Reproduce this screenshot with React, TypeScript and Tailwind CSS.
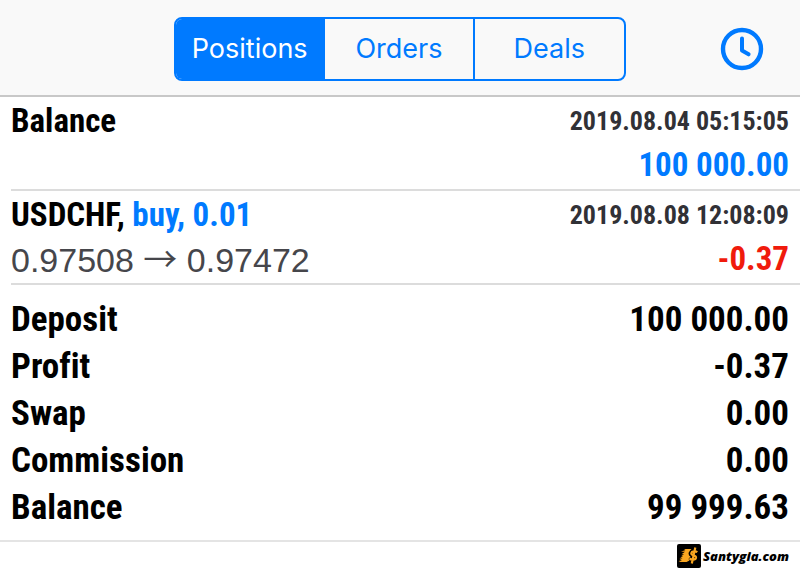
import { useState } from 'react'

const TABS = ['Positions', 'Orders', 'Deals']

const SUMMARY = [
  { label: 'Deposit', value: '100 000.00' },
  { label: 'Profit', value: '-0.37' },
  { label: 'Swap', value: '0.00' },
  { label: 'Commission', value: '0.00' },
  { label: 'Balance', value: '99 999.63' },
]

function ClockIcon() {
  return (
    <svg className="w-11 h-11" viewBox="0 0 44 44" fill="none" stroke="currentColor" aria-hidden="true">
      <circle cx="22" cy="22" r="19" strokeWidth="4.4" />
      <path d="M22 11.500v12l6.600 3.800" strokeWidth="4" strokeLinecap="round" strokeLinejoin="round" />
    </svg>
  )
}

function BrandLogo() {
  return (
    <svg className="w-6 h-6" viewBox="0 0 24 24" aria-hidden="true">
      <rect width="24" height="24" rx="2" fill="#000" />
      <path
        d="M7 5h7.500l-1.500 1.600L11.500 9l.5 2.500 1.500 1-2 2.500 1 1.500-3 1.500H1.500L5 16.200H2l3.500-1.700H2.500L6 12.200H4l3-2H4.500L8 7.800H4L8.500 6z"
        fill="#f9a620"
      />
      <path
        d="M20.300 8.200c-1.700-1.300-5.600-1.200-6 1-.4 2.500 5.200 1.600 4.700 4.500-.5 2.500-4.800 2.400-6.500.7M18.300 3.500l-3.500 16"
        fill="none"
        stroke="#f9a620"
        strokeWidth="2.200"
      />
    </svg>
  )
}

export default function App() {
  const [activeTab, setActiveTab] = useState('Positions')

  return (
    <div className="min-h-screen bg-white text-black font-['Roboto_Condensed','Roboto',sans-serif]">
      <header className="grid grid-cols-[1fr_452px_1fr] items-center h-[97px] pt-[3px] border-b-2 border-[#c8c8c8] bg-[#f9f9f9] font-[Inter,sans-serif] text-[#007aff]">
        <nav className="col-start-2 grid grid-cols-3 h-16 rounded-lg border-2 border-[#007aff] divide-x-2 divide-[#007aff] overflow-hidden text-[27px]">
          {TABS.map((tab) => (
            <button
              key={tab}
              type="button"
              onClick={() => setActiveTab(tab)}
              className={activeTab === tab ? 'bg-[#007aff] text-white' : ''}
            >
              {tab}
            </button>
          ))}
        </nav>
        <button type="button" aria-label="History period" className="justify-self-end mr-9">
          <ClockIcon />
        </button>
      </header>

      <main>
        <ul className="pl-[11px] font-bold text-[33px]">
          <li className="border-b-2 border-[#dcdcdc] pr-[11px] pb-1">
            <div className="flex justify-between items-center h-12">
              <span>Balance</span>
              <time className="text-[26px] text-[#313136]">2019.08.04 05:15:05</time>
            </div>
            <div className="flex justify-end items-center h-10 text-[#007aff]">100 000.00</div>
          </li>
          <li className="border-b-2 border-[#dcdcdc] pr-[11px] pb-1">
            <div className="flex justify-between items-center h-12">
              <span>
                USDCHF, <span className="text-[#007aff]">buy, 0.01</span>
              </span>
              <time className="text-[26px] text-[#313136]">2019.08.08 12:08:09</time>
            </div>
            <div className="flex justify-between items-center h-10">
              <span className="font-['Liberation_Sans',sans-serif] font-normal text-[34px] leading-9 text-[#46464b]">
                0.97508 <span className="font-['Noto_Sans_CJK_JP',sans-serif]">→</span> 0.97472
              </span>
              <span className="text-[#f01b0c]">-0.37</span>
            </div>
          </li>
        </ul>

        <dl className="px-[11px] pt-3 pb-2 border-b-2 border-[#e4e4e4] font-bold text-[35px] [font-variant-ligatures:none]">
          {SUMMARY.map((row) => (
            <div key={row.label} className="flex justify-between items-center h-[47px]">
              <dt>{row.label}</dt>
              <dd>{row.value}</dd>
            </div>
          ))}
        </dl>
      </main>

      <footer className="flex justify-end pr-[11px] pt-[2px]">
        <a
          href="#"
          className="flex items-center gap-[2px] font-['Open_Sans',sans-serif] text-[13px] leading-6 font-extrabold italic"
        >
          <BrandLogo />
          Santygia.com
        </a>
      </footer>
    </div>
  )
}
